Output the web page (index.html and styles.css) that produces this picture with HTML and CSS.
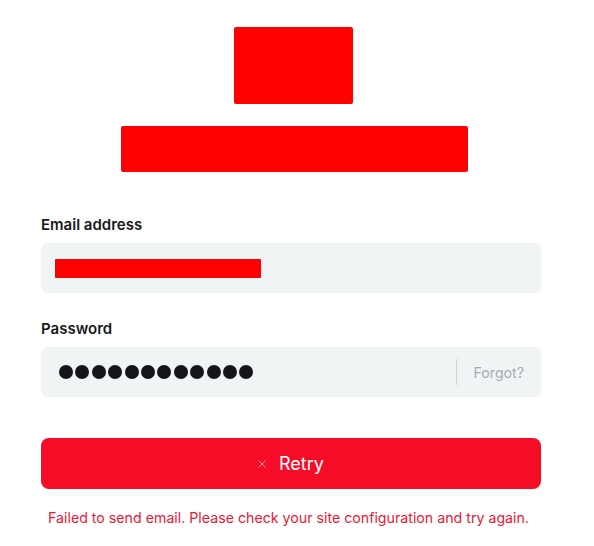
FILE: index.html
```html
<!DOCTYPE html>
<html lang="en">
  <head>
    <meta charset="UTF-8" />
    <meta name="viewport" content="width=device-width, initial-scale=1.0" />
    <title>Sign in</title>
    <link rel="stylesheet" href="styles.css">
  </head>
  <body>
    <div class="brand">
      <div class="brand-logo"></div>
      <div class="brand-name"></div>
    </div>

    <form class="login-form">
      <div class="form-group">
        <label class="field-label">Email address</label>
        <div class="field">
          <span class="email-value"></span>
        </div>
      </div>

      <div class="form-group">
        <label class="field-label">Password</label>
        <div class="field password-field">
          <div class="dots">
            <span></span><span></span><span></span><span></span>
            <span></span><span></span><span></span><span></span>
            <span></span><span></span><span></span><span></span>
          </div>
          <span class="divider"></span>
          <a href="#" class="forgot">Forgot?</a>
        </div>
      </div>

      <button type="button" class="retry-button">
        <svg class="retry-icon" width="8" height="8" viewBox="0 0 8 8">
          <path d="M0.5 0.5 L7.5 7.5 M7.5 0.5 L0.5 7.5" stroke="currentColor" stroke-width="1" fill="none" />
        </svg>
        <span>Retry</span>
      </button>

      <p class="error-message">Failed to send email. Please check your site configuration and try again.</p>
    </form>
  </body>
</html>
```

FILE: styles.css
```css
/* Global Styles */
body {
  font-family: "Inter", "Liberation Sans", sans-serif;
  margin: 0;
  background-color: #ffffff;
  color: #18181b;
}

/* Brand header */
.brand {
  display: flex;
  flex-direction: column;
  align-items: center;
  padding-top: 27px;
  margin-right: 8px;
}

.brand-logo {
  width: 119px;
  height: 77px;
  background: #ff0000;
  border-radius: 2px;
}

.brand-name {
  width: 347px;
  height: 46px;
  margin-top: 22px;
  margin-left: 2px;
  background: #ff0000;
  border-radius: 2px;
}

/* Form */
.login-form {
  width: 500px;
  margin: 43px 0 0 41px;
}

.form-group {
  margin-bottom: 26px;
}

.field-label {
  display: block;
  font-size: 15px;
  line-height: 20px;
  font-weight: 600;
  margin-bottom: 8px;
}

.field {
  height: 50px;
  background: #f1f4f5;
  border-radius: 7px;
  display: flex;
  align-items: center;
  padding: 0 14px;
  box-sizing: border-box;
}

.email-value {
  width: 206px;
  height: 19px;
  background: #ff0000;
  border-radius: 1px;
}

.password-field {
  padding: 0 17px 0 18px;
}

.dots {
  display: flex;
  gap: 2.4px;
  flex: 1;
}

.dots span {
  width: 14px;
  height: 14px;
  border-radius: 50%;
  background: #151519;
}

.divider {
  width: 1px;
  height: 26px;
  background: #cfd4d8;
  margin-right: 16px;
}

.forgot {
  color: #a3abb3;
  font-size: 14.2px;
  text-decoration: none;
}

/* Retry button */
.retry-button {
  width: 100%;
  height: 51px;
  margin-top: 41px;
  background-color: #f50d28;
  color: white;
  border: none;
  border-radius: 8px;
  display: flex;
  align-items: center;
  justify-content: center;
  gap: 13px;
  font-family: inherit;
  font-size: 18px;
  font-weight: 400;
  cursor: pointer;
}

.retry-icon {
  opacity: 0.6;
  margin-top: 1px;
}

.error-message {
  margin: 19px 5px 0 0;
  text-align: center;
  font-size: 14.2px;
  line-height: 20px;
  color: #ee1537;
}
```
